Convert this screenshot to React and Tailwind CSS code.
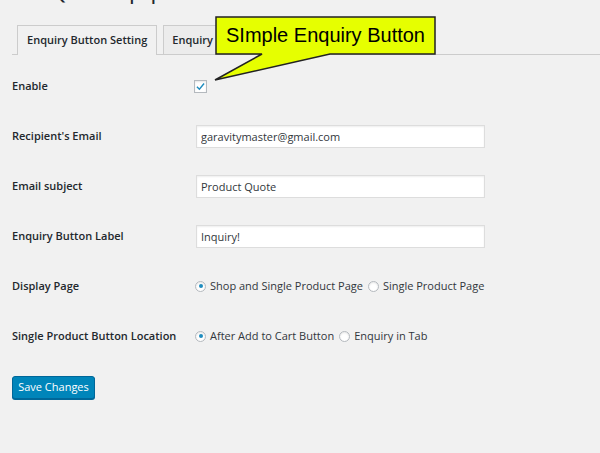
import React from 'react';

const font = { fontFamily: '"Open Sans", "Noto Sans", sans-serif' };

const TextRow = ({ label, value }) => (
  <div className="flex items-center h-[50px]">
    <div className="w-[184px] text-[11px] font-semibold text-[#23282d]">{label}</div>
    <input
      readOnly
      value={value}
      className="w-[289px] h-[23px] px-[4px] bg-white border border-[#dddddd] shadow-[inset_0_1px_2px_rgba(0,0,0,0.07)] text-[11px] text-[#32373c] outline-none"
    />
  </div>
);

const Radio = ({ checked, label }) => (
  <span className="inline-flex items-center">
    <span className="w-[11px] h-[11px] rounded-full bg-white border border-[#b4b9be] shadow-[inset_0_1px_2px_rgba(0,0,0,0.1)] flex items-center justify-center">
      {checked && <span className="w-[4px] h-[4px] rounded-full bg-[#1e8cbe]" />}
    </span>
    <span className="ml-[4px] mr-[5px] text-[11px] text-[#32373c]">{label}</span>
  </span>
);

const RadioRow = ({ label, options }) => (
  <div className="flex items-center h-[50px]">
    <div className="w-[183px] text-[11px] font-semibold text-[#23282d]">{label}</div>
    <div className="flex items-center">
      {options.map((o, i) => (
        <Radio key={o} checked={i === 0} label={o} />
      ))}
    </div>
  </div>
);

export default function App() {
  return (
    <div className="relative w-[600px] h-[453px] overflow-hidden bg-[#f1f1f1]" style={font}>
      <h1 className="absolute left-[12px] top-[-16px] text-[17px] font-semibold text-[#23282d] leading-[20px]">
        Woo Quote Popup
      </h1>

      <div className="pt-[25px] pl-[12px]">
        <div className="flex items-end border-b border-[#cccccc] h-[30px]">
          <div className="ml-[5px] h-[30px] px-[9px] border border-b-0 border-[#cccccc] bg-[#f1f1f1] mb-[-1px] flex items-center text-[11px] font-semibold text-[#23282d]">
            Enquiry Button Setting
          </div>
          <div className="ml-[6px] h-[29px] px-[8px] border border-b-0 border-[#cccccc] bg-[#ececec] flex items-center text-[11px] font-semibold text-[#23282d]">
            Enquiry Form Setting
          </div>
        </div>
      </div>

      <div className="pl-[12px] pt-[6px]">
        <div className="flex items-center h-[50px]">
          <div className="w-[182px] text-[11px] font-semibold text-[#23282d]">Enable</div>
          <span className="w-[13px] h-[13px] bg-white border border-[#b4b9be] shadow-[inset_0_1px_2px_rgba(0,0,0,0.1)] flex items-center justify-center">
            <svg width="11" height="11" viewBox="0 0 20 20">
              <path d="M3.5 10.5 L8 15 L16.5 4.5" fill="none" stroke="#1e8cbe" strokeWidth="2.6" />
            </svg>
          </span>
        </div>
        <TextRow label="Recipient's Email" value="garavitymaster@gmail.com" />
        <TextRow label="Email subject" value="Product Quote" />
        <TextRow label="Enquiry Button Label" value="Inquiry!" />
        <RadioRow label="Display Page" options={['Shop and Single Product Page', 'Single Product Page']} />
        <RadioRow label="Single Product Button Location" options={['After Add to Cart Button', 'Enquiry in Tab']} />

        <button className="mt-[15px] w-[83px] h-[23px] rounded-[3px] bg-[#0085ba] border border-[#006799] shadow-[0_1px_0_#006799] text-white text-[11px]">
          Save Changes
        </button>
      </div>

      <div className="absolute left-0 top-0 w-[600px] h-[100px] pointer-events-none">
        <svg className="absolute left-0 top-0" width="600" height="100">
          <polygon
            points="216,17 435,17 435,54 330,54 215,80 262,54 216,54"
            fill="#e6ff00"
            stroke="#222"
            strokeWidth="1.5"
          />
        </svg>
        <div
          className="absolute left-[216px] top-[16px] w-[219px] h-[37px] flex items-center justify-center text-[20px] text-black"
          style={{ fontFamily: '"Liberation Sans", Arial, sans-serif' }}
        >
          SImple Enquiry Button
        </div>
      </div>
    </div>
  );
}
